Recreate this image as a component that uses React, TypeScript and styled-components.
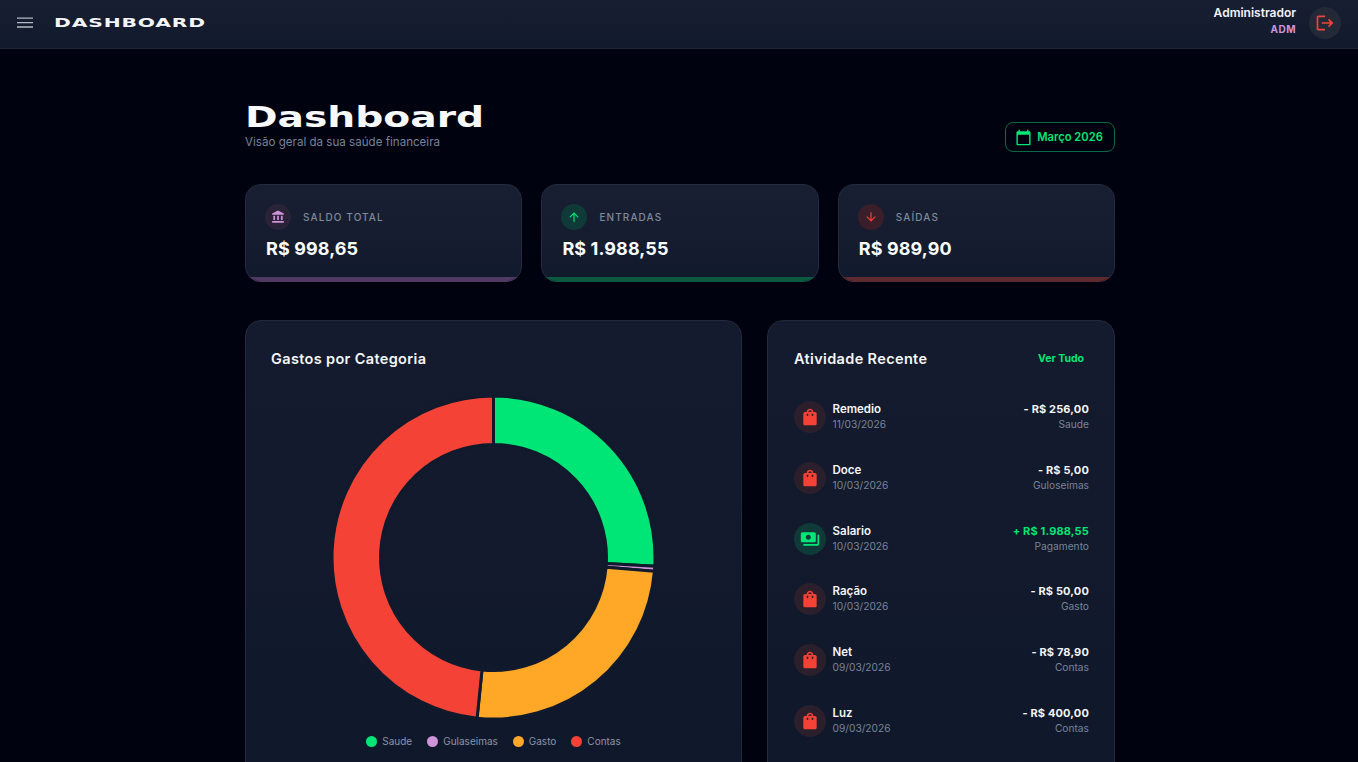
import React from "react";
import styled, { createGlobalStyle } from "styled-components";
import { MdAccountBalance, MdArrowUpward, MdArrowDownward, MdShoppingBag, MdPayments, MdCalendarToday, MdLogout } from "react-icons/md";

const Global = createGlobalStyle`
  html, body { margin: 0; padding: 0; height: 100%; overflow: hidden; background: #00020f; }
  body { font-family: "Inter", "Liberation Sans", sans-serif; color: #fff; }
  * { box-sizing: border-box; }
`;

const Header = styled.header`
  height: 49px;
  display: flex;
  align-items: flex-start;
  justify-content: space-between;
  padding: 0 17px;
  background: linear-gradient(180deg, #171e31 0%, #111a2c 100%);
  border-bottom: 1px solid #1e2535;
`;
const HeaderLeft = styled.div`
  display: flex;
  align-items: center;
  gap: 21px;
  height: 45px;
`;
const Brand = styled.span`
  display: inline-block;
  font-family: "DejaVu Sans", sans-serif;
  font-weight: 700;
  font-size: 12px;
  letter-spacing: 0.5px;
  transform: scaleX(1.69);
  transform-origin: left center;
  color: #f4f5f8;
`;
const HeaderRight = styled.div`
  display: flex;
  align-items: center;
  gap: 13px;
  height: 45px;
`;
const UserBox = styled.div`
  display: flex;
  flex-direction: column;
  align-items: flex-end;
  gap: 3px;
  padding-bottom: 4px;
`;
const UserName = styled.span`
  font-size: 12px;
  font-weight: 600;
  color: #f1f3f6;
  line-height: 15px;
`;
const UserRole = styled.span`
  font-size: 10px;
  font-weight: 700;
  letter-spacing: 0.5px;
  color: #ce93d8;
  line-height: 13px;
`;
const LogoutBtn = styled.div`
  width: 32px;
  height: 32px;
  border-radius: 50%;
  background: #232937;
  display: flex;
  align-items: center;
  justify-content: center;
  color: #f44336;
`;

const Main = styled.main`
  width: 870px;
  margin-left: 245px;
  padding-top: 51px;
`;
const TitleRow = styled.div`
  display: flex;
  align-items: flex-end;
  justify-content: space-between;
  margin-bottom: 32px;
`;
const TitleBlock = styled.div`
  display: flex;
  flex-direction: column;
  padding-bottom: 2px;
`;
const Title = styled.h1`
  margin: 0;
  display: inline-block;
  font-family: "DejaVu Sans", sans-serif;
  font-weight: 700;
  font-size: 28px;
  line-height: 36px;
  transform: scaleX(1.4);
  transform-origin: left center;
  color: #f8f9fb;
`;
const Subtitle = styled.p`
  margin: -2px 0 0;
  font-size: 11.6px;
  line-height: 16px;
  color: #76829a;
`;
const MonthPill = styled.div`
  width: 110px;
  height: 30px;
  padding-right: 2px;
  border: 1px solid #0a6a45;
  border-radius: 8px;
  display: flex;
  align-items: center;
  justify-content: center;
  gap: 5px;
  color: #00e676;
  font-size: 11.2px;
  font-weight: 600;
`;

const Stats = styled.section`
  display: grid;
  grid-template-columns: repeat(3, 1fr);
  gap: 19.2px;
  margin-bottom: 38px;
`;
const StatCard = styled.div<{ $accent: string }>`
  position: relative;
  height: 98px;
  border-radius: 16px;
  border: 1px solid #222a3b;
  border-bottom-color: ${(p) => p.$accent};
  background: linear-gradient(180deg, #191f32 0%, #111a2c 100%);
  padding: 19px 20px 0 19px;
  overflow: hidden;
  &::after {
    content: "";
    position: absolute;
    left: 0;
    right: 0;
    bottom: 0;
    height: 4px;
    background: ${(p) => p.$accent};
  }
`;
const StatHead = styled.div`
  display: flex;
  align-items: center;
  gap: 12px;
  height: 26px;
`;
const StatIcon = styled.div<{ $bg: string; $fg: string }>`
  width: 26px;
  height: 26px;
  border-radius: 50%;
  background: ${(p) => p.$bg};
  color: ${(p) => p.$fg};
  display: flex;
  align-items: center;
  justify-content: center;
`;
const StatLabel = styled.span`
  font-size: 10px;
  font-weight: 500;
  letter-spacing: 1.1px;
  color: #7e899e;
`;
const StatValue = styled.div`
  margin: 6px 0 0 1px;
  font-size: 18px;
  line-height: 26px;
  font-weight: 700;
  letter-spacing: 0.1px;
  color: #fafbfc;
`;

const Lower = styled.section`
  display: grid;
  grid-template-columns: 1fr 0.7fr;
  gap: 25px;
`;
const Panel = styled.div`
  height: 480px;
  border-radius: 16px;
  border: 1px solid #222a3b;
  background: linear-gradient(180deg, #141b2e 0%, #0f182a 100%);
`;
const ChartPanel = styled(Panel)`
  padding: 27.5px 25px;
`;
const PanelTitle = styled.h2`
  margin: 0;
  font-size: 14.5px;
  line-height: 20px;
  font-weight: 600;
  letter-spacing: 0.35px;
  color: #f5f6f8;
`;
const ChartWrap = styled.div`
  display: flex;
  justify-content: center;
  margin-top: 27.5px;
  height: 323px;
`;
const Legend = styled.div`
  display: flex;
  justify-content: center;
  gap: 15px;
  margin-top: 16px;
`;
const LegendItem = styled.div`
  display: flex;
  align-items: center;
  gap: 5px;
  font-size: 10px;
  line-height: 13px;
  color: #8b93a5;
`;
const Dot = styled.span<{ $c: string }>`
  width: 11px;
  height: 11px;
  border-radius: 50%;
  background: ${(p) => p.$c};
`;

const ActivityPanel = styled(Panel)`
  padding: 27.5px 25px 0 26px;
`;
const ActivityHead = styled.div`
  display: flex;
  align-items: center;
  justify-content: space-between;
  margin-bottom: 32.5px;
  padding-right: 5px;
`;
const SeeAll = styled.span`
  font-size: 10.5px;
  font-weight: 700;
  color: #00e676;
`;
const Row = styled.div`
  display: flex;
  align-items: center;
  height: 32px;
  margin-bottom: 28.75px;
`;
const RowIcon = styled.div<{ $bg: string; $fg: string }>`
  width: 32px;
  height: 32px;
  border-radius: 50%;
  background: ${(p) => p.$bg};
  color: ${(p) => p.$fg};
  display: flex;
  align-items: center;
  justify-content: center;
  margin-right: 6.5px;
`;
const RowMain = styled.div`
  flex: 1;
  display: flex;
  flex-direction: column;
`;
const RowSide = styled.div`
  display: flex;
  flex-direction: column;
  align-items: flex-end;
`;
const RowTitle = styled.span`
  font-size: 11.5px;
  line-height: 15px;
  font-weight: 600;
  color: #f4f5f7;
`;
const RowAmount = styled.span<{ $in?: boolean }>`
  font-size: 11px;
  line-height: 15px;
  font-weight: 700;
  letter-spacing: 0.15px;
  color: ${(p) => (p.$in ? "#00e676" : "#f4f5f7")};
`;
const RowMeta = styled.span`
  font-size: 10.2px;
  line-height: 15px;
  color: #79839a;
`;

const C = 161.5;
const OUTER = 161.5;
const INNER = 113;
const polar = (a: number, r: number) => {
  const t = ((a - 90) * Math.PI) / 180;
  return [C + r * Math.cos(t), C + r * Math.sin(t)];
};
const segment = (start: number, end: number) => {
  const [x1, y1] = polar(start, OUTER);
  const [x2, y2] = polar(end, OUTER);
  const [x3, y3] = polar(end, INNER);
  const [x4, y4] = polar(start, INNER);
  const large = end - start > 180 ? 1 : 0;
  return `M${x1} ${y1}A${OUTER} ${OUTER} 0 ${large} 1 ${x2} ${y2}L${x3} ${y3}A${INNER} ${INNER} 0 ${large} 0 ${x4} ${y4}Z`;
};

const slices = [
  { label: "Saude", value: 256, color: "#00e676" },
  { label: "Gulaseimas", value: 5, color: "#ce93d8" },
  { label: "Gasto", value: 250, color: "#ffa726" },
  { label: "Contas", value: 478.9, color: "#f44336" },
];
const total = slices.reduce((s, x) => s + x.value, 0);

const Donut = () => {
  let acc = 0;
  return (
    <svg width={323} height={323} viewBox="0 0 323 323">
      {slices.map((s) => {
        const a = (acc / total) * 360;
        acc += s.value;
        const b = (acc / total) * 360;
        return <path key={s.label} d={segment(a, b)} fill={s.color} stroke="#111a2c" strokeWidth={3} />;
      })}
    </svg>
  );
};

const rows = [
  { t: "Remedio", d: "11/03/2026", a: "- R$ 256,00", c: "Saude" },
  { t: "Doce", d: "10/03/2026", a: "- R$ 5,00", c: "Guloseimas" },
  { t: "Salario", d: "10/03/2026", a: "+ R$ 1.988,55", c: "Pagamento", in: true },
  { t: "Ração", d: "10/03/2026", a: "- R$ 50,00", c: "Gasto" },
  { t: "Net", d: "09/03/2026", a: "- R$ 78,90", c: "Contas" },
  { t: "Luz", d: "09/03/2026", a: "- R$ 400,00", c: "Contas" },
];

export default function App() {
  return (
    <>
      <Global />
      <Header>
        <HeaderLeft>
          <svg width="16" height="12" viewBox="0 0 16 12" fill="none" stroke="#b4b9c4" strokeWidth="1.3">
            <path d="M0 1.2h16M0 5.6h16M0 10h16" />
          </svg>
          <Brand>DASHBOARD</Brand>
        </HeaderLeft>
        <HeaderRight>
          <UserBox>
            <UserName>Administrador</UserName>
            <UserRole>ADM</UserRole>
          </UserBox>
          <LogoutBtn><MdLogout size={20} /></LogoutBtn>
        </HeaderRight>
      </Header>
      <Main>
        <TitleRow>
          <TitleBlock>
            <Title>Dashboard</Title>
            <Subtitle>Visão geral da sua saúde financeira</Subtitle>
          </TitleBlock>
          <MonthPill><MdCalendarToday size={17} />Março 2026</MonthPill>
        </TitleRow>
        <Stats>
          <StatCard $accent="#4f3b61">
            <StatHead>
              <StatIcon $bg="#2a2338" $fg="#ce93d8"><MdAccountBalance size={14} /></StatIcon>
              <StatLabel>SALDO TOTAL</StatLabel>
            </StatHead>
            <StatValue>R$ 998,65</StatValue>
          </StatCard>
          <StatCard $accent="#0d5a41">
            <StatHead>
              <StatIcon $bg="#103a37" $fg="#00e676"><MdArrowUpward size={14} /></StatIcon>
              <StatLabel>ENTRADAS</StatLabel>
            </StatHead>
            <StatValue>R$ 1.988,55</StatValue>
          </StatCard>
          <StatCard $accent="#5c2a30">
            <StatHead>
              <StatIcon $bg="#3a1f2a" $fg="#f44336"><MdArrowDownward size={14} /></StatIcon>
              <StatLabel>SAÍDAS</StatLabel>
            </StatHead>
            <StatValue>R$ 989,90</StatValue>
          </StatCard>
        </Stats>
        <Lower>
          <ChartPanel>
            <PanelTitle>Gastos por Categoria</PanelTitle>
            <ChartWrap><Donut /></ChartWrap>
            <Legend>
              {slices.map((s) => (
                <LegendItem key={s.label}><Dot $c={s.color} />{s.label}</LegendItem>
              ))}
            </Legend>
          </ChartPanel>
          <ActivityPanel>
            <ActivityHead>
              <PanelTitle>Atividade Recente</PanelTitle>
              <SeeAll>Ver Tudo</SeeAll>
            </ActivityHead>
            {rows.map((r) => (
              <Row key={r.t}>
                <RowIcon $bg={r.in ? "#103a37" : "#2c1f2c"} $fg={r.in ? "#00e676" : "#f44336"}>
                  {r.in ? <MdPayments size={20} /> : <MdShoppingBag size={20} />}
                </RowIcon>
                <RowMain>
                  <RowTitle>{r.t}</RowTitle>
                  <RowMeta>{r.d}</RowMeta>
                </RowMain>
                <RowSide>
                  <RowAmount $in={r.in}>{r.a}</RowAmount>
                  <RowMeta>{r.c}</RowMeta>
                </RowSide>
              </Row>
            ))}
          </ActivityPanel>
        </Lower>
      </Main>
    </>
  );
}
